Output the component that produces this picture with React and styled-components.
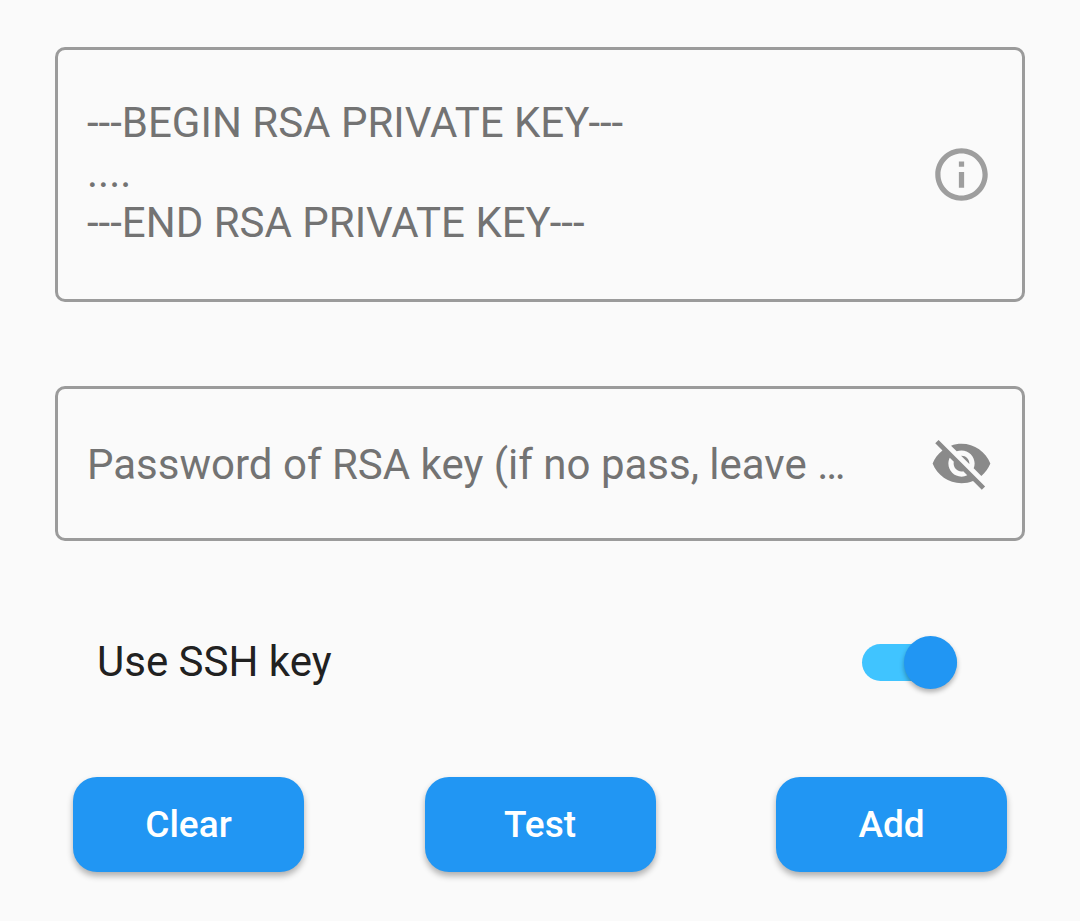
import React, { useState } from 'react';
import styled, { createGlobalStyle } from 'styled-components';

const GlobalStyle = createGlobalStyle`
  * { box-sizing: border-box; }
  body { margin: 0; background: #fafafa; font-family: Roboto, "Noto Sans", sans-serif; }
`;

const Form = styled.form`
  display: flex;
  flex-direction: column;
  padding: 47px 55px 48px;
`;

const Field = styled.div`
  display: flex;
  align-items: center;
  gap: 74px;
  padding: 0 29px;
  height: ${(p) => (p.$tall ? 255 : 155)}px;
  margin-bottom: 84px;
  border: 3px solid #9b9b9b;
  border-radius: 10px;
`;

const inputStyle = `
  flex: 1;
  min-width: 0;
  padding: 0;
  border: 0;
  outline: 0;
  background: transparent;
  color: #212121;
  font-family: inherit;
  font-size: 42px;
  &::placeholder { color: #737373; opacity: 1; text-overflow: ellipsis; }
`;

const KeyInput = styled.textarea`
  ${inputStyle}
  height: 154px;
  line-height: 50px;
  resize: none;
  overflow: hidden;
`;

const PasswordInput = styled.input`
  ${inputStyle}
  height: 52px;
  padding-top: 2px;
  text-overflow: ellipsis;
`;

const IconButton = styled.button`
  display: flex;
  padding: 0;
  border: 0;
  background: none;
  color: ${(p) => (p.$muted ? '#9e9e9e' : '#8a8a8a')};
  svg { display: block; width: 63px; height: 63px; fill: currentColor; }
`;

const SwitchRow = styled.label`
  display: flex;
  align-items: center;
  justify-content: space-between;
  margin-top: 12px;
  padding: 0 68px 0 42px;
  color: #212121;
  font-size: 42px;
  line-height: 50px;
`;

const Switch = styled.input`
  appearance: none;
  display: flex;
  align-items: center;
  width: 95px;
  height: 37px;
  margin: 0;
  border-radius: 19px;
  background: ${(p) => (p.checked ? '#40c4ff' : '#9e9e9e')};
  &::before {
    content: "";
    width: 53px;
    height: 53px;
    flex: none;
    margin-left: ${(p) => (p.checked ? 'auto' : '0')};
    border-radius: 50%;
    background: ${(p) => (p.checked ? '#2196f3' : '#fafafa')};
    box-shadow: 0 3px 5px rgba(0, 0, 0, 0.3);
  }
`;

const Actions = styled.div`
  display: flex;
  justify-content: space-between;
  margin-top: 90px;
  padding: 0 18px;
`;

const Button = styled.button`
  width: 231px;
  height: 95px;
  padding: 0;
  border: 0;
  border-radius: 24px;
  background: #2196f3;
  color: #fff;
  font-family: inherit;
  font-size: 37px;
  font-weight: 500;
  box-shadow: 0 4px 6px rgba(0, 0, 0, 0.3);
`;

export default function App() {
  const [enabled, setEnabled] = useState(true);
  const [visible, setVisible] = useState(false);
  return (
    <>
      <GlobalStyle />
      <Form onSubmit={(e) => e.preventDefault()}>
        <Field $tall>
          <KeyInput
            aria-label="RSA private key"
            placeholder={'---BEGIN RSA PRIVATE KEY---\n....\n---END RSA PRIVATE KEY---'}
          />
          <IconButton $muted type="button" aria-label="Key information">
            <svg viewBox="0 0 24 24">
              <path d="M11 7h2v2h-2zm0 4h2v6h-2zm1-9C6.48 2 2 6.48 2 12s4.48 10 10 10 10-4.48 10-10S17.52 2 12 2zm0 18c-4.41 0-8-3.59-8-8s3.59-8 8-8 8 3.59 8 8-3.59 8-8 8z" />
            </svg>
          </IconButton>
        </Field>
        <Field>
          <PasswordInput
            type={visible ? 'text' : 'password'}
            aria-label="Password of RSA key"
            placeholder="Password of RSA key (if no pass, leave blank)"
          />
          <IconButton type="button" aria-label="Show password" onClick={() => setVisible(!visible)}>
            <svg viewBox="0 0 24 24">
              <path d="M12 7c2.76 0 5 2.24 5 5 0 .65-.13 1.26-.36 1.83l2.92 2.92c1.51-1.26 2.7-2.89 3.43-4.75-1.73-4.39-6-7.5-11-7.5-1.4 0-2.74.25-3.98.7l2.16 2.16C10.74 7.13 11.35 7 12 7zM2 4.27l2.28 2.28.46.46C3.08 8.3 1.78 10.02 1 12c1.73 4.39 6 7.5 11 7.5 1.55 0 3.03-.3 4.38-.84l.42.42L19.73 22 21 20.73 3.27 3 2 4.27zM7.53 9.8l1.55 1.55c-.05.21-.08.43-.08.65 0 1.66 1.34 3 3 3 .22 0 .44-.03.65-.08l1.55 1.55c-.67.33-1.41.53-2.2.53-2.76 0-5-2.24-5-5 0-.79.2-1.53.53-2.2zm4.31-.78l3.15 3.15.02-.16c0-1.66-1.34-3-3-3l-.17.01z" />
            </svg>
          </IconButton>
        </Field>
        <SwitchRow>
          Use SSH key
          <Switch type="checkbox" role="switch" checked={enabled} onChange={() => setEnabled(!enabled)} />
        </SwitchRow>
        <Actions>
          <Button type="reset">Clear</Button>
          <Button type="button">Test</Button>
          <Button type="submit">Add</Button>
        </Actions>
      </Form>
    </>
  );
}
